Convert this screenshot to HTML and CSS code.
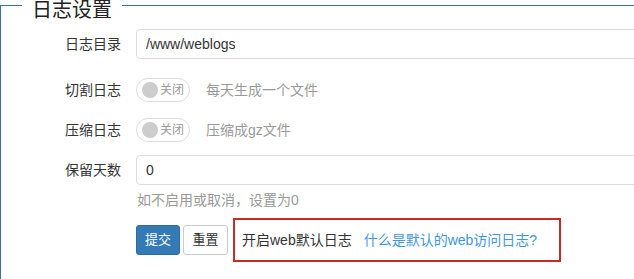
FILE: index.html
```html
<!DOCTYPE html>
<html lang="zh-CN">
<head>
<meta charset="utf-8">
<title>日志设置</title>
<link rel="stylesheet" href="styles.css">
</head>
<body>
<fieldset class="panel">
  <legend class="panel-title">日志设置</legend>
  <form class="form">
    <div class="row row-first">
      <label class="label">日志目录</label>
      <input class="input" type="text" value="/www/weblogs">
    </div>
    <div class="row row-toggle1">
      <span class="label">切割日志</span>
      <span class="toggle"><span class="knob"></span><span class="toggle-text">关闭</span></span>
      <span class="desc">每天生成一个文件</span>
    </div>
    <div class="row row-toggle2">
      <span class="label">压缩日志</span>
      <span class="toggle"><span class="knob"></span><span class="toggle-text">关闭</span></span>
      <span class="desc">压缩成gz文件</span>
    </div>
    <div class="row row-days">
      <label class="label">保留天数</label>
      <input class="input" type="text" value="0">
    </div>
    <div class="help">如不启用或取消，设置为0</div>
    <div class="row row-actions">
      <span class="label"></span>
      <button type="button" class="btn btn-primary">提交</button>
      <button type="button" class="btn btn-default">重置</button>
      <div class="notice">
        <span class="notice-text">开启web默认日志</span>
        <a class="notice-link" href="#">什么是默认的web访问日志?</a>
      </div>
    </div>
  </form>
</fieldset>
</body>
</html>
```

FILE: styles.css
```css
html, body {
  margin: 0;
  padding: 0;
  overflow: hidden;
  background: #fff;
}

body {
  font-family: "Liberation Sans", "Noto Sans CJK SC", sans-serif;
  font-size: 14px;
  color: #333;
}

.panel {
  margin: -13px 0 0 0;
  padding: 0;
  width: 760px;
  height: 340px;
  border: 1px solid #3b6ea5;
  box-sizing: border-box;
  min-width: 0;
}

.panel-title {
  margin-left: 21px;
  padding: 10px 10px 0 10px;
  font-size: 20px;
  line-height: 26px;
  color: #222;
}

.form {
  display: flex;
  flex-direction: column;
  padding-top: 6px;
}

.row {
  display: flex;
  align-items: center;
  height: 30px;
}

.row-toggle1 { margin-top: 16px; }
.row-toggle2 { margin-top: 10px; }
.row-days { margin-top: 10px; }

.label {
  width: 120px;
  margin-right: 15px;
  text-align: right;
  font-size: 14px;
  line-height: 20px;
  color: #333;
  flex: none;
}

.input {
  box-sizing: border-box;
  width: 560px;
  height: 30px;
  margin: 0;
  padding: 0 9px;
  border: 1px solid #ddd;
  border-radius: 4px 0 0 4px;
  font-family: "Liberation Sans", "Noto Sans CJK SC", sans-serif;
  font-size: 14px;
  color: #333;
  outline: none;
  flex: none;
}

.toggle {
  box-sizing: border-box;
  display: flex;
  align-items: center;
  width: 54px;
  height: 24px;
  border: 1px solid #ddd;
  border-radius: 12px;
  padding-left: 5px;
  flex: none;
}

.knob {
  width: 16px;
  height: 16px;
  border-radius: 50%;
  background: #ccc;
  flex: none;
}

.toggle-text {
  margin-left: 2px;
  font-size: 12px;
  line-height: 16px;
  color: #999;
}

.desc {
  margin-left: 16px;
  font-size: 14px;
  line-height: 20px;
  color: #999;
}

.help {
  margin-top: 5px;
  padding-left: 136px;
  font-size: 14px;
  line-height: 20px;
  color: #999;
}

.row-actions {
  height: 44px;
  margin-top: 8px;
}

.btn {
  box-sizing: border-box;
  height: 30px;
  margin: 0;
  padding: 0 8px;
  font-family: "Liberation Sans", "Noto Sans CJK SC", sans-serif;
  font-size: 13px;
  line-height: 28px;
  border-radius: 3px;
  border: 1px solid #ccc;
  cursor: pointer;
  flex: none;
}

.btn-primary {
  width: 44px;
  background: #337ab7;
  border-color: #2e6da4;
  color: #fff;
}

.btn-default {
  width: 45px;
  margin-left: 3px;
  background: #fff;
  color: #333;
}

.notice {
  box-sizing: border-box;
  display: flex;
  align-items: center;
  height: 44px;
  margin-left: 5px;
  padding: 0 22px 0 7px;
  border: 2px solid #c9282d;
  flex: none;
}

.notice-text {
  font-size: 14px;
  line-height: 20px;
  color: #333;
}

.notice-link {
  margin-left: 12px;
  font-size: 14px;
  line-height: 20px;
  color: #3f97dc;
  text-decoration: none;
}
```
